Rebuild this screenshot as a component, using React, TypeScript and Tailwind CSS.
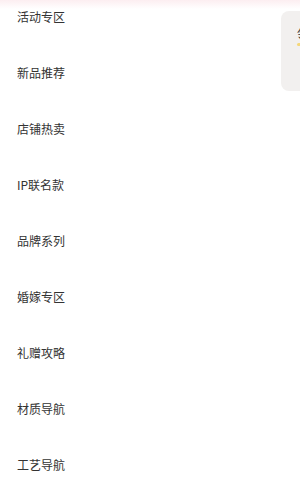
const items = ['活动专区', '新品推荐', '店铺热卖', 'IP联名款', '品牌系列', '婚嫁专区', '礼赠攻略', '材质导航', '工艺导航'];

export default function App() {
  return (
    <div
      className="relative w-[300px] h-[489px] overflow-hidden bg-white"
      style={{ fontFamily: '"Noto Sans CJK SC", "Liberation Sans", sans-serif' }}
    >
      {/* faint pink band at the top edge */}
      <div className="absolute left-0 top-0 w-full h-[9px] bg-gradient-to-b from-[#fceef1] to-white" />

      <ul className="relative flex flex-col gap-[40px] pt-[9px] pl-[17px]">
        {items.map((label) => (
          <li key={label} className="h-[16px] leading-[16px] text-[12px] text-[#333333]">
            {label}
          </li>
        ))}
      </ul>

      {/* side card peeking from the right */}
      <div className="absolute left-[281px] top-[11px] w-[40px] h-[80px] rounded-[8px] bg-[#f2f0ef] overflow-hidden">
        <div className="absolute left-[16px] top-[16px] text-[12px] leading-[14px] text-[#333333]">领</div>
        <div className="absolute left-[16px] top-[32px] w-[6px] h-[3px] rounded-full bg-[#f5d77a]" />
      </div>
    </div>
  );
}
